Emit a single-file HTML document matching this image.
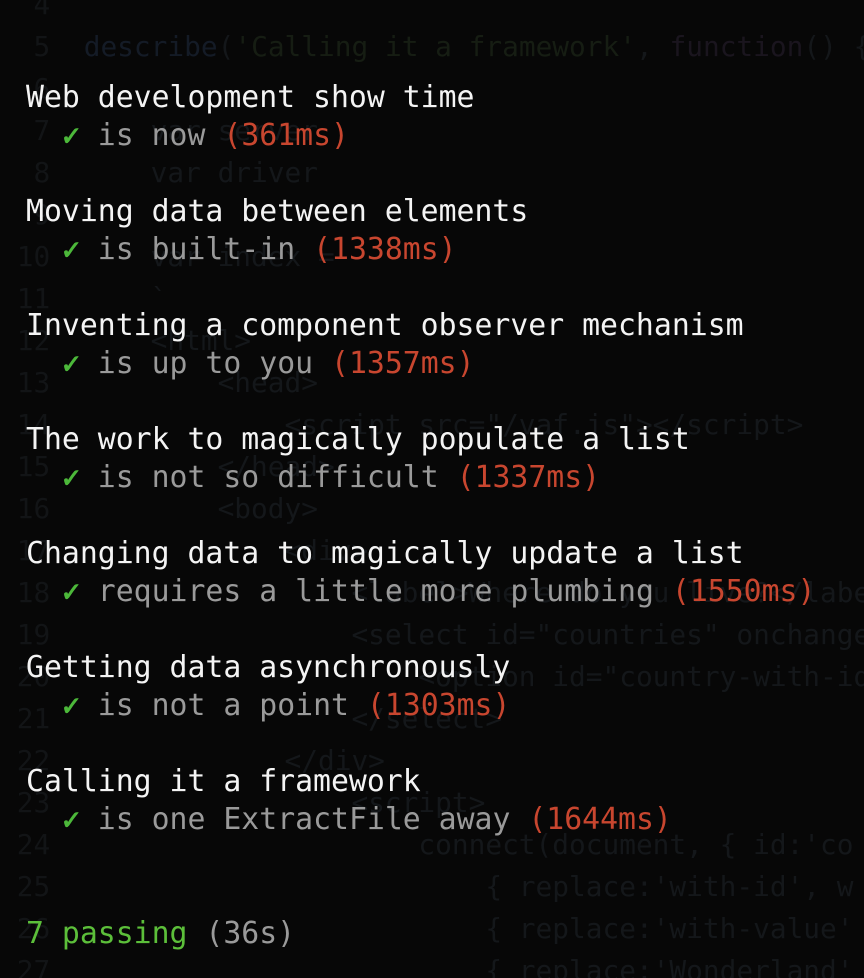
<!DOCTYPE html>
<html><head><meta charset="utf-8"><style>
html,body{margin:0;padding:0;background:#070707;width:864px;height:978px;overflow:hidden}
body{position:relative;font-family:"DejaVu Sans Mono","Liberation Mono",monospace}
.bg{position:absolute;left:0;font-size:27.8px;line-height:42px;white-space:pre;color:#14171a}
.n{color:#121416}
.fg{position:absolute;left:26px;font-size:29.8px;line-height:38px;white-space:pre;color:#f4f4f4}
.g{color:#9a9a9a}.ok{color:#4cb83a;font-weight:bold;text-shadow:1px 0 0 #4cb83a,0 1px 0 #4cb83a}.r{color:#c8462f}.gr{color:#5cbf3a}
</style></head><body>
<div class="bg" style="top:-16px"><span class="n">  4</span>
<span class="n">  5</span>  <span style="color:#141b26">describe</span>(<span style="color:#161d13">'Calling it a framework'</span>, <span style="color:#1a151e">function</span>() {
<span class="n">  6</span>
<span class="n">  7</span>      var server
<span class="n">  8</span>      var driver
<span class="n">  9</span>
<span class="n"> 10</span>      var index =
<span class="n"> 11</span>      `
<span class="n"> 12</span>      &lt;html&gt;
<span class="n"> 13</span>          &lt;head&gt;
<span class="n"> 14</span>              &lt;script src="/vaf.js"&gt;&lt;/script&gt;
<span class="n"> 15</span>          &lt;/head&gt;
<span class="n"> 16</span>          &lt;body&gt;
<span class="n"> 17</span>              &lt;div&gt;
<span class="n"> 18</span>                  &lt;label&gt;Where do you live?&lt;/label&gt;
<span class="n"> 19</span>                  &lt;select id="countries" onchange
<span class="n"> 20</span>                      &lt;option id="country-with-id
<span class="n"> 21</span>                  &lt;/select&gt;
<span class="n"> 22</span>              &lt;/div&gt;
<span class="n"> 23</span>                  &lt;script&gt;
<span class="n"> 24</span>                      connect(document, { id:'co
<span class="n"> 25</span>                          { replace:'with-id', w
<span class="n"> 26</span>                          { replace:'with-value'
<span class="n"> 27</span>                          { replace:'Wonderland'</div>
<div class="fg" style="top:79px">Web development show time
  <span class="ok">✓</span> <span class="g">is now</span> <span class="r">(361ms)</span>

Moving data between elements
  <span class="ok">✓</span> <span class="g">is built-in</span> <span class="r">(1338ms)</span>

Inventing a component observer mechanism
  <span class="ok">✓</span> <span class="g">is up to you</span> <span class="r">(1357ms)</span>

The work to magically populate a list
  <span class="ok">✓</span> <span class="g">is not so difficult</span> <span class="r">(1337ms)</span>

Changing data to magically update a list
  <span class="ok">✓</span> <span class="g">requires a little more plumbing</span> <span class="r">(1550ms)</span>

Getting data asynchronously
  <span class="ok">✓</span> <span class="g">is not a point</span> <span class="r">(1303ms)</span>

Calling it a framework
  <span class="ok">✓</span> <span class="g">is one ExtractFile away</span> <span class="r">(1644ms)</span>


<span class="gr">7 passing</span> <span class="g">(36s)</span></div>
</body></html>
